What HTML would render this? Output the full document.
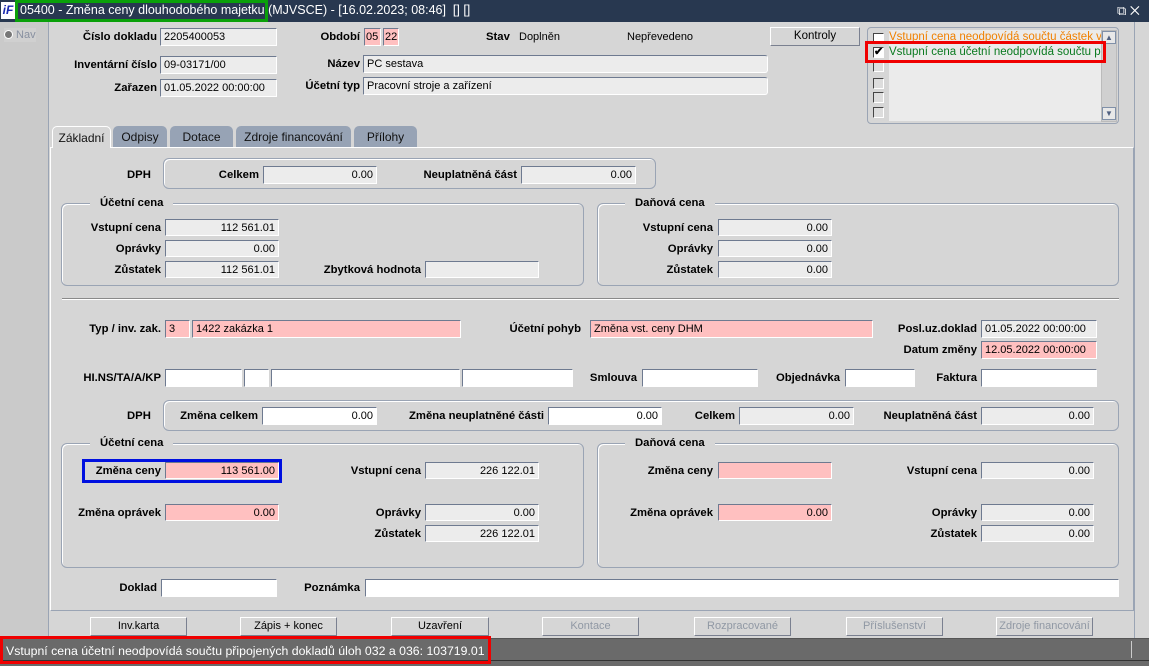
<!DOCTYPE html>
<html><head><meta charset="utf-8"><style>
*{box-sizing:border-box}
body{margin:0;width:1149px;height:666px;position:relative;overflow:hidden;background:#d6d6d6;font-family:"Liberation Sans",Arial,sans-serif;font-size:11px;color:#000}
.a{position:absolute}
.L{position:absolute;font-weight:bold;white-space:nowrap;text-align:right;line-height:19px;font-size:11.3px}
.f{position:absolute;height:18px;background:#ececec;border:1px solid #fff;border-top-color:#6e7a90;border-left-color:#6e7a90;line-height:17px;padding:0 3px;white-space:nowrap;overflow:hidden}
.r{text-align:right}
.p{background:#ffc0c0}
.w{background:#fff}
.g{position:absolute;border:1px solid #9aa4b4;border-radius:6px;box-shadow:1px 1px 0 #fff inset}
.gt{position:absolute;background:#d6d6d6;font-weight:bold;padding:0 10px;line-height:14px;font-size:11.3px}
.tab{position:absolute;top:126px;height:21px;background:#97a3b5;border-radius:5px 5px 0 0;line-height:22px;text-align:center;font-size:12px;color:#111}
.b{position:absolute;top:617px;height:19px;border:1px solid #fff;border-right-color:#7a8090;border-bottom-color:#7a8090;background:#d6d6d6;text-align:center;line-height:17px;font-size:11px}
.dis{color:#9098a4}
.cb{position:absolute;left:873px;width:11px;height:11px;border:1px solid #fff;border-top-color:#444;border-left-color:#444;background:#ddd}
</style></head><body>
<div class="a" style="left:0;top:0;width:1149px;height:22px;background:#283850"></div>
<div class="a" style="left:1px;top:2px;width:14px;height:17px;background:#fff;color:#1a2ab0;font-weight:bold;font-style:italic;font-size:12px;line-height:17px;text-align:center">iF</div>
<div class="a" style="left:20px;top:0;line-height:21px;color:#fff;font-size:12.5px;white-space:nowrap">05400 - Změna ceny dlouhodobého majetku (MJVSCE) - [16.02.2023; 08:46]&nbsp; [] []</div>
<div class="a" style="left:15px;top:0;width:253px;height:22px;border:3px solid #0aa00a"></div>
<div class="a" style="left:1117px;top:1px;color:#fff;font-size:13px;line-height:20px">⧉ ✕</div>
<div class="a" style="left:0;top:22px;width:49px;height:616px;background:#cacaca;border-right:1px solid #9aa4b4"></div>
<div class="a" style="left:4px;top:28px;width:32px;height:14px;background:#d0d0d0;color:#8890a0;line-height:14px"><span style="display:inline-block;width:9px;height:9px;border-radius:50%;background:#777;border:1px solid #fff;vertical-align:-1px"></span> Nav</div>
<div class="L" style="right:992px;top:28px">Číslo dokladu</div><div class="f" style="left:160px;top:28px;width:117px">2205400053</div>
<div class="L" style="right:992px;top:56px">Inventární číslo</div><div class="f" style="left:160px;top:56px;width:117px">09-03171/00</div>
<div class="L" style="right:992px;top:79px">Zařazen</div><div class="f" style="left:160px;top:79px;width:117px">01.05.2022 00:00:00</div>
<div class="L" style="right:789px;top:28px">Období</div><div class="f p" style="left:364px;top:28px;width:17px;padding:0 1px">05</div><div class="f p" style="left:383px;top:28px;width:16px;padding:0 1px">22</div>
<div class="L" style="left:486px;top:28px">Stav</div><div class="a" style="left:519px;top:28px;line-height:19px">Doplněn</div><div class="a" style="left:627px;top:28px;line-height:19px">Nepřevedeno</div>
<div class="L" style="right:789px;top:55px">Název</div><div class="f" style="left:363px;top:55px;width:405px;border-radius:0 3px 3px 0">PC sestava</div>
<div class="L" style="right:789px;top:77px">Účetní typ</div><div class="f" style="left:363px;top:77px;width:405px;border-radius:0 3px 3px 0">Pracovní stroje a zařízení</div>
<div class="b" style="left:770px;top:27px;width:90px;font-size:11.5px;border-color:#fff #7a8090 #7a8090 #fff">Kontroly</div>
<div class="a" style="left:867px;top:27px;width:252px;height:97px;border:1px solid #9aa4b4;border-radius:4px"></div>
<div class="a" style="left:889px;top:30px;width:212px;height:91px;background:#ebebeb"></div>
<div class="a" style="left:889px;top:30px;width:212px;line-height:15px;color:#f08000;white-space:nowrap;overflow:hidden;font-size:11.5px">Vstupní cena neodpovídá součtu částek víc</div>
<div class="a" style="left:889px;top:45px;width:212px;line-height:15px;color:#0a7a20;white-space:nowrap;overflow:hidden;font-size:11.5px">Vstupní cena účetní neodpovídá součtu přip</div>
<div class="cb" style="top:33px;background:#fff"></div>
<div class="cb" style="top:47px;background:#fff;font-size:11px;line-height:9px;font-weight:bold">✔</div>
<div class="cb" style="top:61px"></div><div class="cb" style="top:78px"></div><div class="cb" style="top:92px"></div><div class="cb" style="top:107px"></div>
<div class="a" style="left:1101px;top:30px;width:16px;height:92px;background:#d0d0d0;border:1px solid #bbb"></div>
<div class="a" style="left:1102px;top:31px;width:14px;height:13px;background:#e8e8e8;border:1px solid #8090a8;font-size:8px;color:#506080;text-align:center;line-height:11px">▲</div>
<div class="a" style="left:1102px;top:107px;width:14px;height:13px;background:#e8e8e8;border:1px solid #8090a8;font-size:8px;color:#506080;text-align:center;line-height:11px">▼</div>
<div class="a" style="left:865px;top:41px;width:241px;height:22px;border:3px solid #f00000"></div>
<div class="tab" style="left:52px;width:59px;background:#d6d6d6;border:1px solid #fff;border-bottom:none;height:22px;z-index:2">Základní</div>
<div class="tab" style="left:113px;width:54px">Odpisy</div>
<div class="tab" style="left:170px;width:63px">Dotace</div>
<div class="tab" style="left:236px;width:115px">Zdroje financování</div>
<div class="tab" style="left:354px;width:63px">Přílohy</div>
<div class="a" style="left:50px;top:147px;width:1084px;height:464px;border:1px solid #fff;border-right-color:#9aa4b4;border-bottom-color:#9aa4b4"></div>
<div class="a" style="left:1134px;top:22px;width:15px;height:616px;border-left:1px solid #9aa4b4"></div>
<div class="L" style="left:127px;top:166px">DPH</div>
<div class="g" style="left:163px;top:158px;width:493px;height:31px"></div>
<div class="L" style="right:890px;top:166px">Celkem</div><div class="f r" style="left:263px;top:166px;width:114px">0.00</div>
<div class="L" style="right:632px;top:166px">Neuplatněná část</div><div class="f r" style="left:521px;top:166px;width:115px">0.00</div>
<div class="g" style="left:61px;top:203px;width:523px;height:83px"></div>
<div class="gt" style="left:90px;top:196px">Účetní cena</div>
<div class="L" style="right:988px;top:219px">Vstupní cena</div><div class="f r" style="left:165px;top:219px;width:114px;height:17px;line-height:16px">112 561.01</div>
<div class="L" style="right:988px;top:240px">Oprávky</div><div class="f r" style="left:165px;top:240px;width:114px;height:17px;line-height:16px">0.00</div>
<div class="L" style="right:988px;top:261px">Zůstatek</div><div class="f r" style="left:165px;top:261px;width:114px;height:17px;line-height:16px">112 561.01</div>
<div class="L" style="right:728px;top:261px">Zbytková hodnota</div><div class="f" style="left:425px;top:261px;width:114px;height:17px"></div>
<div class="g" style="left:597px;top:203px;width:522px;height:83px"></div>
<div class="gt" style="left:625px;top:196px">Daňová cena</div>
<div class="L" style="right:436px;top:219px">Vstupní cena</div><div class="f r" style="left:718px;top:219px;width:114px;height:17px;line-height:16px">0.00</div>
<div class="L" style="right:436px;top:240px">Oprávky</div><div class="f r" style="left:718px;top:240px;width:114px;height:17px;line-height:16px">0.00</div>
<div class="L" style="right:436px;top:261px">Zůstatek</div><div class="f r" style="left:718px;top:261px;width:114px;height:17px;line-height:16px">0.00</div>
<div class="a" style="left:62px;top:298px;width:1057px;height:2px;border-top:1px solid #8a8a8a;border-bottom:1px solid #fff"></div>
<div class="L" style="right:988px;top:320px">Typ / inv. zak.</div><div class="f p" style="left:165px;top:320px;width:25px">3</div><div class="f p" style="left:192px;top:320px;width:269px">1422 zakázka 1</div>
<div class="L" style="right:568px;top:320px">Účetní pohyb</div><div class="f p" style="left:590px;top:320px;width:283px">Změna vst. ceny DHM</div>
<div class="L" style="right:172px;top:320px">Posl.uz.doklad</div><div class="f" style="left:981px;top:320px;width:116px">01.05.2022 00:00:00</div>
<div class="L" style="right:172px;top:341px">Datum změny</div><div class="f p" style="left:981px;top:341px;width:116px">12.05.2022 00:00:00</div>
<div class="L" style="right:988px;top:369px">HI.NS/TA/A/KP</div>
<div class="f w" style="left:165px;top:369px;width:77px"></div><div class="f w" style="left:244px;top:369px;width:25px"></div><div class="f w" style="left:271px;top:369px;width:189px"></div><div class="f w" style="left:462px;top:369px;width:111px"></div>
<div class="L" style="right:512px;top:369px">Smlouva</div><div class="f w" style="left:642px;top:369px;width:116px"></div>
<div class="L" style="right:309px;top:369px">Objednávka</div><div class="f w" style="left:845px;top:369px;width:70px"></div>
<div class="L" style="right:172px;top:369px">Faktura</div><div class="f w" style="left:981px;top:369px;width:116px"></div>
<div class="L" style="left:127px;top:407px">DPH</div>
<div class="g" style="left:163px;top:400px;width:956px;height:31px"></div>
<div class="L" style="right:891px;top:407px">Změna celkem</div><div class="f w r" style="left:262px;top:407px;width:115px">0.00</div>
<div class="L" style="right:605px;top:407px">Změna neuplatněné části</div><div class="f w r" style="left:548px;top:407px;width:114px">0.00</div>
<div class="L" style="right:414px;top:407px">Celkem</div><div class="f r" style="left:739px;top:407px;width:115px">0.00</div>
<div class="L" style="right:172px;top:407px">Neuplatněná část</div><div class="f r" style="left:981px;top:407px;width:113px">0.00</div>
<div class="g" style="left:61px;top:443px;width:523px;height:125px"></div>
<div class="gt" style="left:90px;top:436px">Účetní cena</div>
<div class="L" style="right:988px;top:462px">Změna ceny</div><div class="f p r" style="left:165px;top:462px;width:114px;height:17px;line-height:16px">113 561.00</div>
<div class="a" style="left:82px;top:459px;width:200px;height:24px;border:3px solid #0010e0"></div>
<div class="L" style="right:728px;top:462px">Vstupní cena</div><div class="f r" style="left:425px;top:462px;width:114px;height:17px;line-height:16px">226 122.01</div>
<div class="L" style="right:988px;top:504px">Změna oprávek</div><div class="f p r" style="left:165px;top:504px;width:114px;height:17px;line-height:16px">0.00</div>
<div class="L" style="right:728px;top:504px">Oprávky</div><div class="f r" style="left:425px;top:504px;width:114px;height:17px;line-height:16px">0.00</div>
<div class="L" style="right:728px;top:525px">Zůstatek</div><div class="f r" style="left:425px;top:525px;width:114px;height:17px;line-height:16px">226 122.01</div>
<div class="g" style="left:597px;top:443px;width:522px;height:125px"></div>
<div class="gt" style="left:625px;top:436px">Daňová cena</div>
<div class="L" style="right:436px;top:462px">Změna ceny</div><div class="f p r" style="left:718px;top:462px;width:114px;height:17px;line-height:16px"></div>
<div class="L" style="right:172px;top:462px">Vstupní cena</div><div class="f r" style="left:981px;top:462px;width:113px;height:17px;line-height:16px">0.00</div>
<div class="L" style="right:436px;top:504px">Změna oprávek</div><div class="f p r" style="left:718px;top:504px;width:114px;height:17px;line-height:16px">0.00</div>
<div class="L" style="right:172px;top:504px">Oprávky</div><div class="f r" style="left:981px;top:504px;width:113px;height:17px;line-height:16px">0.00</div>
<div class="L" style="right:172px;top:525px">Zůstatek</div><div class="f r" style="left:981px;top:525px;width:113px;height:17px;line-height:16px">0.00</div>
<div class="L" style="right:992px;top:579px">Doklad</div><div class="f w" style="left:161px;top:579px;width:116px"></div>
<div class="L" style="right:789px;top:579px">Poznámka</div><div class="f w" style="left:365px;top:579px;width:754px"></div>
<div class="b" style="left:90px;width:97px">Inv.karta</div>
<div class="b" style="left:240px;width:97px">Zápis + konec</div>
<div class="b" style="left:391px;width:98px">Uzavření</div>
<div class="b dis" style="left:542px;width:97px">Kontace</div>
<div class="b dis" style="left:694px;width:97px">Rozpracované</div>
<div class="b dis" style="left:846px;width:97px">Příslušenství</div>
<div class="b dis" style="left:996px;width:97px">Zdroje financování</div>
<div class="a" style="left:0;top:638px;width:1149px;height:28px;background:#6a6a6a;border-top:1px solid #555"></div>
<div class="a" style="left:0;top:660px;width:1149px;height:1px;background:#333"></div>
<div class="a" style="left:1131px;top:641px;width:1px;height:17px;background:#ccc"></div>
<div class="a" style="left:6px;top:642px;line-height:18px;color:#fff;font-size:12.3px;white-space:nowrap">Vstupní cena účetní neodpovídá součtu připojených dokladů úloh 032 a 036: 103719.01</div>
<div class="a" style="left:0;top:636px;width:491px;height:28px;border:3px solid #f00000"></div>
</body></html>
